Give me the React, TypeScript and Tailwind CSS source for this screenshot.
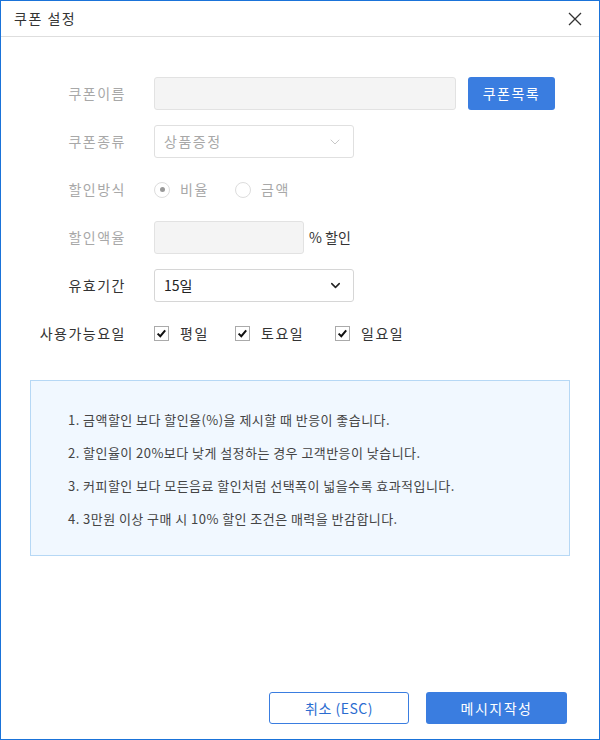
import { ChevronDown } from 'lucide-react';

const font = { fontFamily: '"Noto Sans CJK KR", "Noto Sans", sans-serif' };

const tips = [
    '1. 금액할인 보다 할인율(%)을 제시할 때 반응이 좋습니다.',
    '2. 할인율이 20%보다 낮게 설정하는 경우 고객반응이 낮습니다.',
    '3. 커피할인 보다 모든음료 할인처럼 선택폭이 넓을수록 효과적입니다.',
    '4. 3만원 이상 구매 시 10% 할인 조건은 매력을 반감합니다.',
];

function Row({ label, muted, children }: { label: string; muted?: boolean; children: React.ReactNode }) {
    return (
        <div className="flex items-center h-[33px]">
            <div className={`w-[125px] text-right text-[14px] tracking-[1.5px] ${muted ? 'text-[#a8a8a8]' : 'text-[#333]'}`}>{label}</div>
            <div className="ml-[28px] flex items-center h-full">{children}</div>
        </div>
    );
}

function Check({ label }: { label: string }) {
    return (
        <label className="flex items-center">
            <span className="w-[15px] h-[15px] border border-[#aaa] bg-white flex items-center justify-center">
                <svg width="11" height="11" viewBox="0 0 11 11">
                    <path d="M1.6 5.6 L4.3 8.2 L9.2 2.4" stroke="#111" strokeWidth="2" fill="none" />
                </svg>
            </span>
            <span className="ml-[11px] text-[14px] tracking-[1.5px] text-[#333]">{label}</span>
        </label>
    );
}

function Radio({ label, checked }: { label: string; checked?: boolean }) {
    return (
        <label className="flex items-center">
            <span className="w-[16px] h-[16px] rounded-full border border-[#ddd] bg-white flex items-center justify-center">
                {checked && <span className="w-[5px] h-[5px] rounded-full bg-[#999]" />}
            </span>
            <span className="ml-[10px] text-[14px] tracking-[1.5px] text-[#a8a8a8]">{label}</span>
        </label>
    );
}

export default function App() {
    return (
        <div style={font} className="w-[600px] h-[740px] border border-[#1a73d9] bg-white flex flex-col">
            <div className="h-[36px] border-b border-[#dedede] flex items-center justify-between pl-[13px] pr-[16px]">
                <span className="text-[14px] tracking-[1.5px] text-[#333]">쿠폰 설정</span>
                <svg width="14" height="14" viewBox="0 0 14 14" className="mr-[1px]">
                    <path d="M1 1 L13 13 M13 1 L1 13" stroke="#333" strokeWidth="1.3" fill="none" />
                </svg>
            </div>

            <div className="pt-[40px] flex flex-col gap-[15px]">
                <Row label="쿠폰이름" muted>
                    <div className="w-[302px] h-[33px] bg-[#f4f4f4] border border-[#e2e2e2] rounded-[3px]" />
                    <button className="ml-[12px] w-[87px] h-[33px] bg-[#3a7de0] text-white text-[14px] tracking-[1.5px] rounded-[3px]">쿠폰목록</button>
                </Row>
                <Row label="쿠폰종류" muted>
                    <div className="w-[200px] h-[33px] border border-[#e0e0e0] rounded-[3px] flex items-center justify-between pl-[9px] pr-[10px]">
                        <span className="text-[14px] tracking-[1.5px] text-[#a8a8a8]">상품증정</span>
                        <ChevronDown size={16} strokeWidth={1.4} className="text-[#c4c4c4]" />
                    </div>
                </Row>
                <Row label="할인방식" muted>
                    <div className="flex items-center">
                        <div className="w-[81px]"><Radio label="비율" checked /></div>
                        <Radio label="금액" />
                    </div>
                </Row>
                <Row label="할인액율" muted>
                    <div className="w-[150px] h-[33px] bg-[#f4f4f4] border border-[#e2e2e2] rounded-[3px]" />
                    <span className="ml-[5px] text-[14px] text-[#333]">% 할인</span>
                </Row>
                <Row label="유효기간">
                    <div className="w-[200px] h-[33px] border border-[#d6d6d6] rounded-[3px] flex items-center justify-between pl-[9px] pr-[10px]">
                        <span className="text-[14px] text-[#222]">15일</span>
                        <ChevronDown size={15} strokeWidth={2.4} className="text-[#222]" />
                    </div>
                </Row>
                <Row label="사용가능요일">
                    <div className="flex items-center">
                        <div className="w-[81px]"><Check label="평일" /></div>
                        <div className="w-[100px]"><Check label="토요일" /></div>
                        <Check label="일요일" />
                    </div>
                </Row>
            </div>

            <div className="mx-[29px] mt-[30px] h-[176px] bg-[#f1f8ff] border border-[#b6d8f5] pl-[37px] pt-[22px] flex flex-col">
                {tips.map((t) => (
                    <div key={t} className="h-[33px] leading-[33px] text-[13px] tracking-[0.45px] text-[#444]">{t}</div>
                ))}
            </div>

            <div className="mt-auto mb-[15px] mr-[32px] flex justify-end gap-[17px]">
                <button className="w-[140px] h-[32px] border border-[#3a7de0] rounded-[3px] text-[14px] tracking-[0.5px] text-[#2a6cd0] bg-white">취소 (ESC)</button>
                <button className="w-[141px] h-[32px] bg-[#3a7de0] rounded-[3px] text-[14px] tracking-[1.5px] text-white">메시지작성</button>
            </div>
        </div>
    );
}
